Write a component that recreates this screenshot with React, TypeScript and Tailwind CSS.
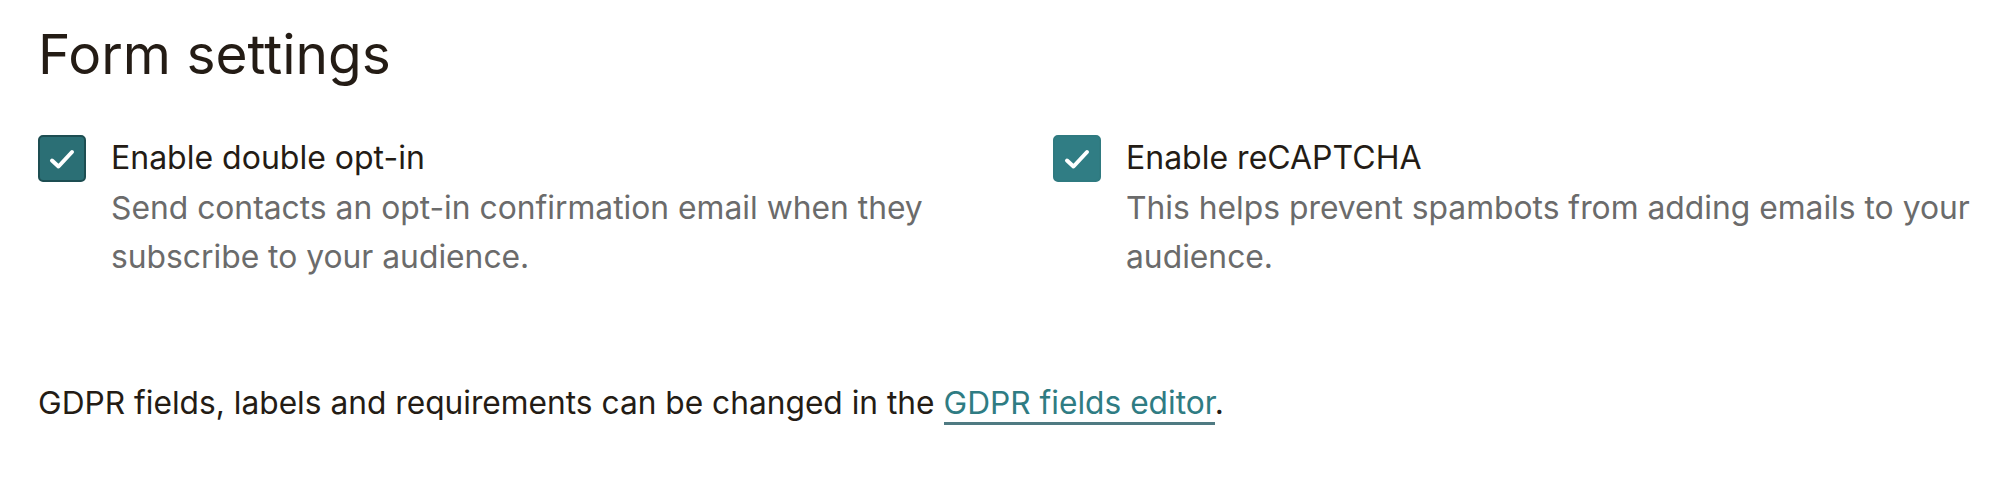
import React from 'react';

const font = { fontFamily: 'Inter, "Noto Sans", sans-serif' };

const CheckBox: React.FC<{ focused?: boolean }> = ({ focused }) => (
  <span
    className={
      'flex h-[47px] w-[48px] shrink-0 items-center justify-center rounded-[5px] border-2 ' +
      (focused ? 'border-[#1d4e52] bg-[#2b6f75]' : 'border-[#2f7a80] bg-[#307d84]')
    }
  >
    <svg width="26" height="22" viewBox="0 0 26 22" fill="none">
      <path d="M3 12.5l6.5 6L23 4" stroke="#fff" strokeWidth="4" strokeLinecap="round" strokeLinejoin="round" />
    </svg>
  </span>
);

const Option: React.FC<{ label: string; text: string; focused?: boolean }> = ({ label, text, focused }) => (
  <label className="flex items-start gap-[25px]">
    <CheckBox focused={focused} />
    <div className="pt-[1px]">
      <div className="text-[32px] leading-[44px] text-[#241c15]">{label}</div>
      <p className="mt-[3px] text-[31.8px] leading-[49px] text-[#6b6b6b]">{text}</p>
    </div>
  </label>
);

export default function App() {
  return (
    <div className="min-h-[490px] w-[2014px] bg-white pl-[38px] pr-[16px] pt-[22px]" style={font}>
      <h2 className="text-[55px] font-normal leading-[64px] text-[#241c15]">Form settings</h2>
      <div className="mt-[49px] grid grid-cols-[923px_1fr] gap-[92px]">
        <Option
          focused
          label="Enable double opt-in"
          text="Send contacts an opt-in confirmation email when they subscribe to your audience."
        />
        <Option
          label="Enable reCAPTCHA"
          text="This helps prevent spambots from adding emails to your audience."
        />
      </div>
      <p className="mt-[100px] text-[31.7px] leading-[44px] text-[#241c15]">
        GDPR fields, labels and requirements can be changed in the{' '}
        <a href="#" className="border-b-[3px] border-[#4f7a82] text-[#2f7c83]">
          GDPR fields editor
        </a>
        .
      </p>
    </div>
  );
}
